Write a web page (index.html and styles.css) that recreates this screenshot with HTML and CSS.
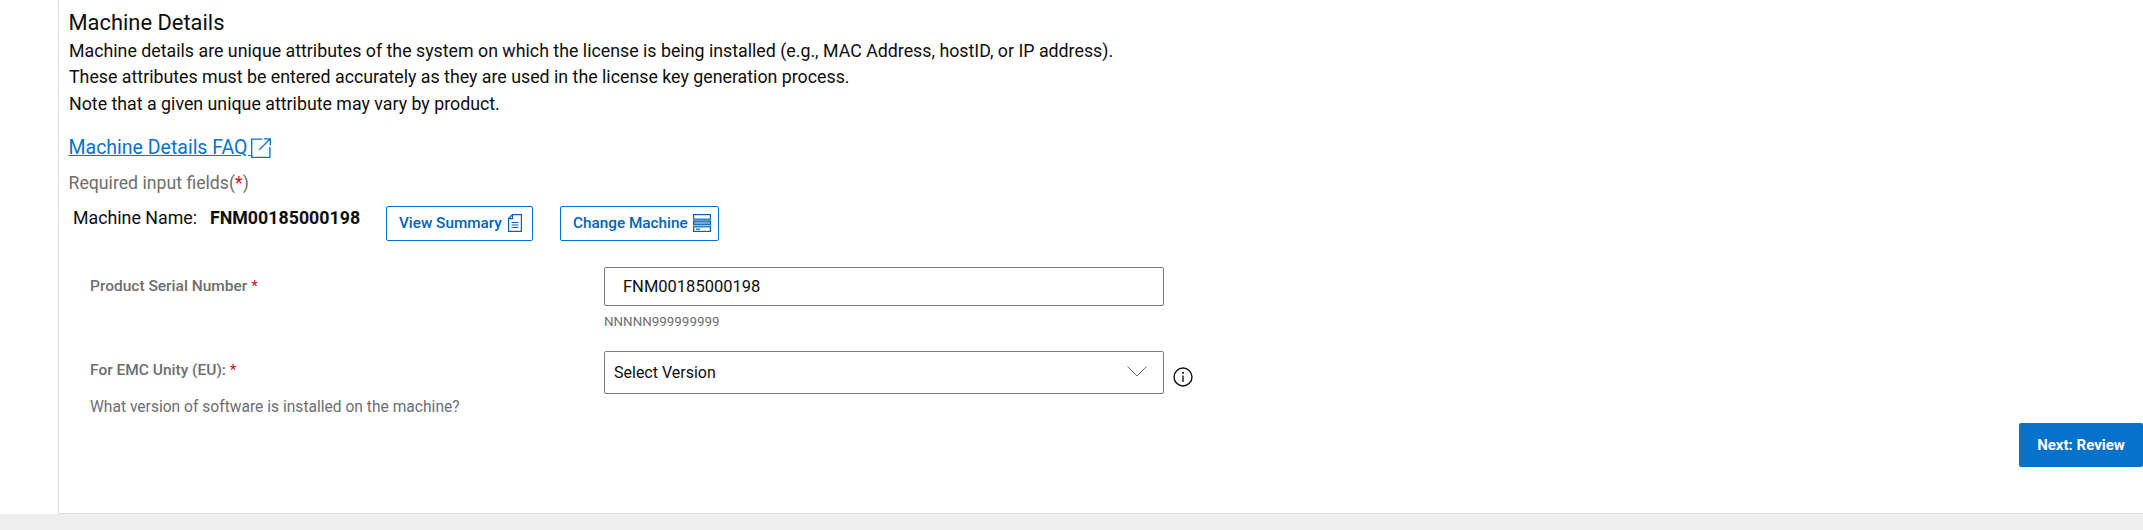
FILE: index.html
```html
<!DOCTYPE html>
<html lang="en">
<head>
<meta charset="utf-8">
<title>Machine Details</title>
<link rel="stylesheet" href="styles.css">
</head>
<body>
<div class="shell">
  <aside class="rail"></aside>
  <main class="panel">
    <h1 class="title">Machine Details</h1>
    <p class="intro">Machine details are unique attributes of the system on which the license is being installed (e.g., MAC Address, hostID, or IP address).<br>These attributes must be entered accurately as they are used in the license key generation process.<br>Note that a given unique attribute may vary by product.</p>
    <div class="faq"><a class="faq-link" href="#">Machine Details FAQ <svg class="ext-icon" viewBox="0 0 18 18" fill="none" stroke="currentColor" stroke-width="1.2"><path d="M10 1H.6v16.4H17V8"/><path d="M7.5 10.5 17 1M11.5 .8H17.4V6.5"/></svg></a></div>
    <p class="required">Required input fields(<span class="star">*</span>)</p>
    <div class="machine">
      <span class="machine-label">Machine Name:</span>
      <strong class="machine-value">FNM00185000198</strong>
      <button class="outline view" type="button">View Summary
        <svg class="doc-icon" viewBox="0 0 14 18" fill="none" stroke="currentColor" stroke-width="1.2"><path d="M4.5 .6H13.4V17.4H.6V4.6Z"/><path d="M4.5 .6V4.6H.6M3.5 8.5h7M3.5 11h7M3.5 13.5h7"/></svg>
      </button>
      <button class="outline change" type="button">Change Machine
        <svg class="srv-icon" viewBox="0 0 18 18" fill="none" stroke="currentColor" stroke-width="1.2"><rect x=".6" y=".6" width="16.8" height="4.6"/><rect x=".6" y="12.8" width="16.8" height="4.6"/><rect x=".6" y="7" width="16.8" height="3.8" fill="currentColor" fill-opacity=".55"/><path d="M3 15.2h4"/></svg>
      </button>
    </div>
    <div class="form">
      <div class="row first">
        <label class="field-label">Product Serial Number <span class="star">*</span></label>
        <div class="field">
          <input class="text-input" type="text" value="FNM00185000198">
          <div class="hint">NNNNN999999999</div>
        </div>
      </div>
      <div class="row second">
        <div class="label-col">
          <label class="field-label">For EMC Unity (EU): <span class="star">*</span></label>
          <div class="help">What version of software is installed on the machine?</div>
        </div>
        <div class="select-wrap">
          <div class="select">
            <span>Select Version</span>
            <svg class="chev" viewBox="0 0 20 11" fill="none" stroke="#6e6e6e" stroke-width="1"><path d="M.5 .5 10 10 19.5 .5"/></svg>
          </div>
          <svg class="info" viewBox="0 0 20 20" fill="none" stroke="#111" stroke-width="1.4"><circle cx="10" cy="10" r="9"/><path d="M10 8.5V15"/><path d="M10 5v1.8" stroke-width="1.8"/></svg>
        </div>
      </div>
    </div>
    <div class="actions"><button class="primary" type="button">Next: Review</button></div>
  </main>
</div>
<footer class="foot"></footer>
</body>
</html>
```

FILE: styles.css
```css
* { box-sizing: border-box; }
html, body { margin: 0; padding: 0; }
body {
  width: 2143px;
  height: 530px;
  overflow: hidden;
  background: #fff;
  color: #0e0e0e;
  font-family: Roboto, "Liberation Sans", sans-serif;
  display: flex;
  flex-direction: column;
}
.shell { display: flex; height: 514px; }
.rail { width: 58px; flex: none; }
.panel {
  flex: 1;
  min-width: 0;
  border-left: 1px solid #e1e1e1;
  border-bottom: 1px solid #e1e1e1;
  padding: 10px 0 0 10px;
}
.foot { flex: 1; background: #eee; }
.title { margin: 0 0 0 -0.5px; font-size: 21.9px; font-weight: 400; line-height: 26px; }
.intro { margin: 1.5px 0 0; font-size: 17.8px; line-height: 26.5px; }
.faq { margin: 18.5px 0 0 -0.5px; line-height: 24px; font-size: 19.5px; }
.faq-link { color: #0672cb; text-decoration: underline; }
.ext-icon { width: 20px; height: 20px; vertical-align: -4px; margin-left: -1px; }
.required { margin: 11px 0 0 -0.5px; font-size: 17.7px; line-height: 24px; color: #6e6e6e; }
.star { color: #ce1126; font-weight: 400; }
.machine { display: flex; align-items: flex-start; margin-top: 11px; padding-left: 4px; font-size: 17.8px; line-height: 24px; }
.machine-label { width: 137px; }
.machine-value { width: 176px; font-weight: 700; }
.outline {
  display: flex;
  align-items: center;
  height: 35px;
  padding: 0 9px 0 12px;
  border: 1px solid #0672cb;
  border-radius: 2px;
  background: #fff;
  color: #0063b8;
  font: 500 15.3px Roboto, sans-serif;
  white-space: nowrap;
}
.view { width: 147px; gap: 6px; margin-right: 27px; }
.change { width: 159px; gap: 5px; padding-right: 6px; }
.doc-icon { width: 14px; height: 18px; flex: none; }
.srv-icon { width: 18px; height: 18px; flex: none; }
.form { margin-top: 26px; }
.row { display: flex; padding-left: 21px; }
.field-label { display: block; width: 514px; font-size: 15.5px; font-weight: 500; line-height: 20px; color: #6e6e6e; }
.first .field-label { margin-top: 9px; }
.text-input {
  display: block;
  width: 560px;
  height: 39px;
  padding: 0 18px;
  border: 1px solid #7e7e7e;
  border-radius: 2px;
  color: #0e0e0e;
  font: 400 16.5px Roboto, sans-serif;
}
.hint { margin-top: 8px; font-size: 13.4px; line-height: 16px; color: #6e6e6e; }
.second { margin-top: 21.5px; }
.label-col { width: 514px; padding-top: 8.5px; }
.help { margin-top: 17px; font-size: 15.6px; line-height: 20px; color: #6e6e6e; }
.select-wrap { display: flex; align-items: flex-start; }
.select {
  display: flex;
  align-items: center;
  justify-content: space-between;
  width: 560px;
  height: 43px;
  padding: 0 16px 0 9px;
  border: 1px solid #7e7e7e;
  border-radius: 2px;
  font-size: 16px;
}
.chev { width: 20px; height: 11px; flex: none; margin-bottom: 2px; }
.info { width: 20px; height: 20px; margin: 15.5px 0 0 9px; flex: none; }
.actions { display: flex; justify-content: flex-end; margin-top: 6.5px; }
.primary {
  width: 124px;
  height: 44px;
  border: 0;
  border-radius: 2px;
  background: #0672cb;
  color: #fff;
  font: 700 15px Roboto, sans-serif;
}
```
